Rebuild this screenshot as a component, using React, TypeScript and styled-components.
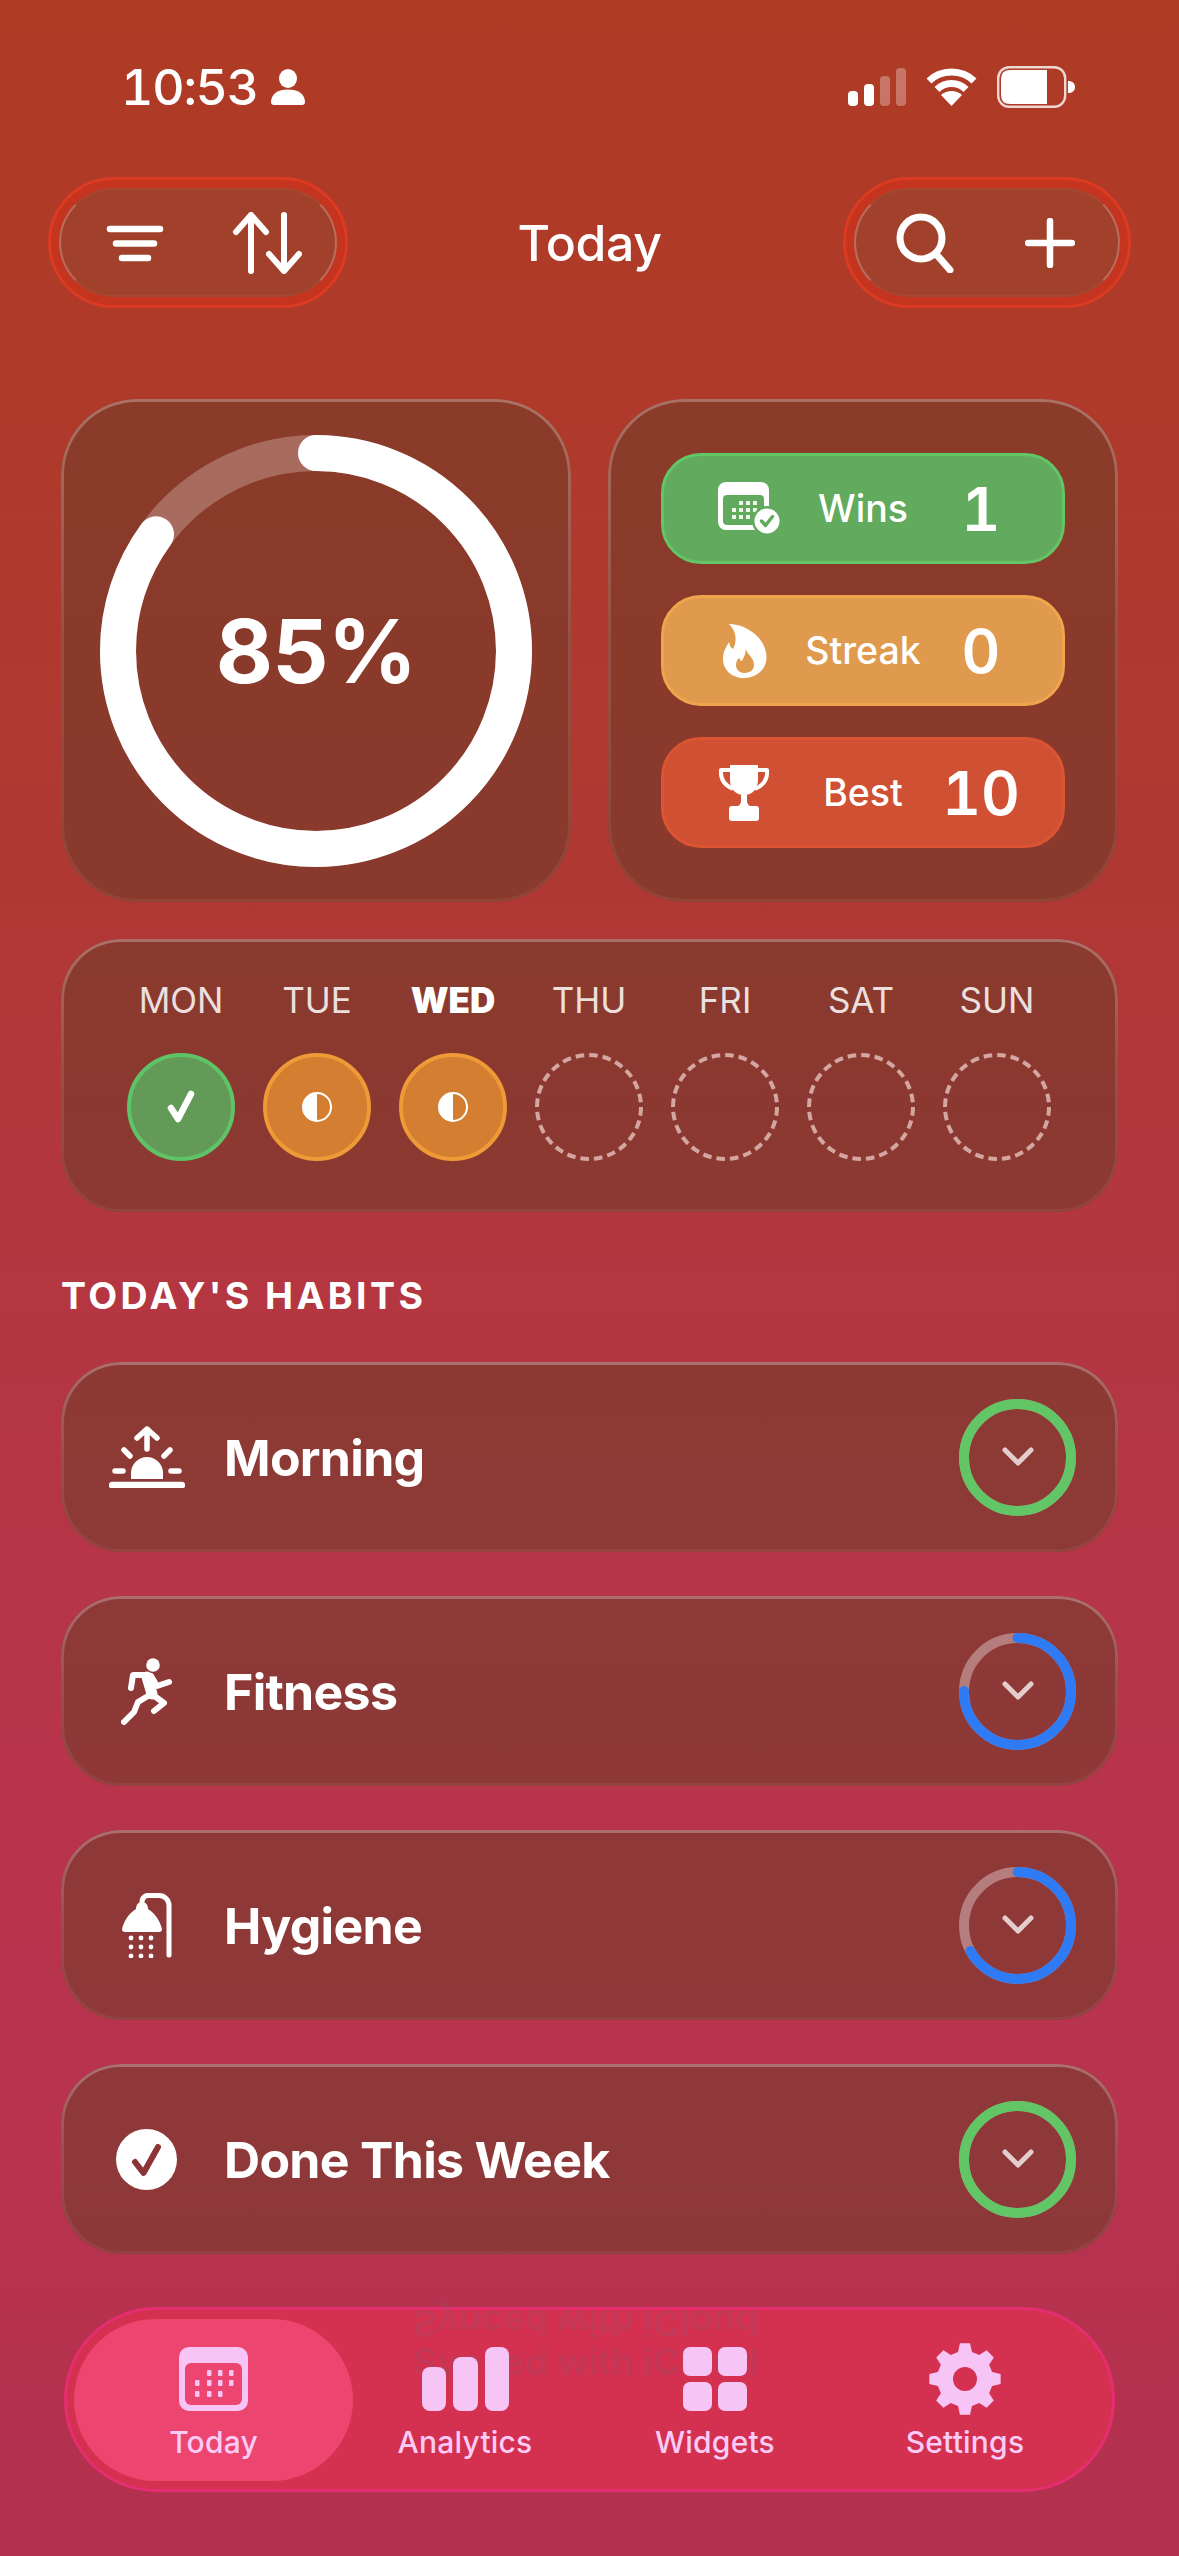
import React from "react";
import styled, { createGlobalStyle } from "styled-components";

const Global = createGlobalStyle`
  html, body { margin: 0; padding: 0; background: #B5304E; }
  * { box-sizing: border-box; }
`;

const Page = styled.div`
  width: 1179px;
  height: 2556px;
  overflow: hidden;
  padding: 66px 61px 0;
  display: flex;
  flex-direction: column;
  font-family: Inter, "Liberation Sans", sans-serif;
  color: #fff;
  background: linear-gradient(180deg, #AE3B24 0%, #AF3A2A 15%, #B03834 35%, #B43642 52%, #B8344C 72%, #B8334F 85%, #B2304E 100%);
`;

const StatusBar = styled.div`
  height: 42px;
  padding: 0 43px 0 60px;
  display: flex;
  align-items: center;
  justify-content: space-between;
`;
const TimeGroup = styled.div`
  display: flex;
  align-items: center;
  gap: 13px;
`;
const Time = styled.span`
  font-size: 50px;
  font-weight: 500;
  line-height: 42px;
  font-variant-numeric: tabular-nums;
  letter-spacing: -1.2px;
`;
const StatusIcons = styled.div`
  display: flex;
  align-items: center;
  gap: 20px;
`;

const Header = styled.header`
  margin: 69px -13px 0;
  height: 131px;
  display: grid;
  grid-template-columns: 1fr auto 1fr;
  align-items: center;
`;
const PillOuter = styled.div<{ $end?: boolean; $w: number }>`
  justify-self: ${(p) => (p.$end ? "end" : "start")};
  width: ${(p) => p.$w}px;
  height: 131px;
  padding: 8px;
  border-radius: 66px;
  background: #C5341F;
  border: 3px solid #DB3B22;
`;
const PillInner = styled.div<{ $pad: number; $gap: number }>`
  height: 109px;
  border-radius: 55px;
  background: #A1402B;
  border: 2px solid rgba(255, 255, 255, 0.24);
  border-top-color: rgba(255, 255, 255, 0.04);
  border-bottom-color: rgba(255, 255, 255, 0.04);
  display: flex;
  align-items: center;
  padding-left: ${(p) => p.$pad}px;
  gap: ${(p) => p.$gap}px;
`;
const Title = styled.h1`
  margin: 0;
  font-size: 50px;
  font-weight: 500;
  letter-spacing: -0.4px;
`;

const Glass = styled.div`
  position: relative;
  background: rgba(107, 60, 40, 0.55);
  &::before {
    content: "";
    position: absolute;
    inset: 0;
    border-radius: inherit;
    padding: 3px;
    background: linear-gradient(180deg, rgba(255, 255, 255, 0.28) 0%, rgba(255, 255, 255, 0.12) 45%, rgba(255, 255, 255, 0.05) 100%);
    -webkit-mask: linear-gradient(#000 0 0) content-box, linear-gradient(#000 0 0);
    -webkit-mask-composite: xor;
    mask-composite: exclude;
    pointer-events: none;
  }
`;

const CardRow = styled.section`
  margin-top: 91px;
  display: grid;
  grid-template-columns: 510px 510px;
  gap: 37px;
`;
const SquareCard = styled(Glass)`
  height: 503px;
  border-radius: 76px;
`;
const RingCard = styled(SquareCard)`
  display: grid;
  place-items: center;
  & > * { grid-area: 1 / 1; }
`;
const Percent = styled.span`
  font-size: 88px;
  font-weight: 700;
  letter-spacing: -0.8px;
`;
const StatsCard = styled(SquareCard)`
  padding: 54px 53px;
  display: flex;
  flex-direction: column;
  gap: 31px;
`;
const StatPill = styled.div<{ $bg: string; $line: string }>`
  height: 112px;
  border-radius: 40px;
  background: ${(p) => p.$bg};
  border: 3px solid ${(p) => p.$line};
  padding: 0 28px 0 54px;
  display: grid;
  grid-template-columns: 79px 132px 104px;
  align-items: center;
  justify-items: center;
`;
const StatIcon = styled.div`
  justify-self: start;
  display: flex;
`;
const StatLabel = styled.span`
  font-size: 37.5px;
  font-weight: 500;
  white-space: nowrap;
`;
const StatValue = styled.span`
  font-size: 60px;
  font-weight: 600;
  font-variant-numeric: tabular-nums;
`;

const WeekCard = styled(Glass)`
  margin-top: 37px;
  height: 273px;
  border-radius: 60px;
  padding: 40px 0 0 52px;
  display: grid;
  grid-template-columns: repeat(7, 136px);
  justify-items: center;
  align-content: start;
`;
const DayCol = styled.div`
  display: flex;
  flex-direction: column;
  align-items: center;
  gap: 31px;
`;
const DayLabel = styled.span<{ $on?: boolean }>`
  font-size: 35px;
  line-height: 43px;
  font-weight: ${(p) => (p.$on ? 900 : 400)};
  color: ${(p) => (p.$on ? "#fff" : "rgba(255,255,255,0.85)")};
`;
const DayMark = styled.div<{ $bg: string; $line: string }>`
  width: 108px;
  height: 108px;
  border-radius: 50%;
  background: ${(p) => p.$bg};
  border: 4px solid ${(p) => p.$line};
  display: grid;
  place-items: center;
`;

const SectionTitle = styled.h2`
  margin: 60px 0 0;
  height: 48px;
  font-size: 37.5px;
  line-height: 48px;
  font-weight: 700;
  letter-spacing: 3.4px;
`;
const Habits = styled.div`
  margin-top: 42px;
  display: flex;
  flex-direction: column;
  gap: 44px;
`;
const HabitRow = styled(Glass)`
  height: 190px;
  border-radius: 60px;
  padding: 0 42px 0 0;
  display: flex;
  align-items: center;
`;
const HabitIcon = styled.div`
  width: 163px;
  padding-left: 8px;
  display: grid;
  place-items: center;
`;
const HabitName = styled.span`
  flex: 1;
  padding-top: 2px;
  font-size: 50px;
  font-weight: 700;
  letter-spacing: -0.7px;
`;
const HabitRing = styled.div`
  width: 117px;
  height: 117px;
  display: grid;
  place-items: center;
  & > * { grid-area: 1 / 1; }
`;

const TabBar = styled.nav`
  position: relative;
  margin: 53px 3px 0 3px;
  height: 185px;
  border-radius: 92px;
  background: #D43150;
  border: 3px solid #E52E70;
  padding: 9px 7px;
  display: grid;
  grid-template-columns: 279px 224px 276px 224px;
`;
const Ghost = styled.div`
  position: absolute;
  left: 346px;
  top: 33px;
  font-size: 37px;
  font-weight: 600;
  white-space: nowrap;
  color: rgba(150, 80, 110, 0.28);
  line-height: 37px;
`;
const GhostFlip = styled(Ghost)`
  top: -5px;
  transform: scaleY(-1);
`;
const Tab = styled.div<{ $on?: boolean }>`
  position: relative;
  height: 162px;
  border-radius: 81px;
  background: ${(p) => (p.$on ? "#EC4570" : "transparent")};
  display: flex;
  flex-direction: column;
  align-items: center;
  padding-top: 24px;
  color: #F6C5F6;
`;
const TabIconBox = styled.div`
  height: 72px;
  display: flex;
  align-items: center;
  justify-content: center;
`;
const TabLabel = styled.span`
  margin-top: 9px;
  font-size: 30px;
  line-height: 36px;
  font-weight: 500;
  letter-spacing: 0.2px;
  color: #F9CBF6;
`;

function Ring({ size, width, pct, color, track }: { size: number; width: number; pct: number; color: string; track: string }) {
  const r = (size - width) / 2;
  const c = 2 * Math.PI * r;
  return (
    <svg width={size} height={size} viewBox={`0 0 ${size} ${size}`} style={{ transform: "rotate(-90deg)" }}>
      <circle cx={size / 2} cy={size / 2} r={r} fill="none" stroke={track} strokeWidth={width} />
      <circle
        cx={size / 2}
        cy={size / 2}
        r={r}
        fill="none"
        stroke={color}
        strokeWidth={width}
        strokeLinecap="round"
        strokeDasharray={`${(c * pct) / 100} ${c}`}
      />
    </svg>
  );
}

const Chevron = () => (
  <svg width="32" height="20" viewBox="0 0 32 20" fill="none" stroke="rgba(255,255,255,0.75)" strokeWidth="5" strokeLinecap="round" strokeLinejoin="round">
    <path d="M3 3 L16 16 L29 3" />
  </svg>
);

const PersonIcon = () => (
  <svg width="34" height="36" viewBox="0 0 34 36" fill="#fff">
    <ellipse cx="17" cy="9.5" rx="9" ry="9.5" />
    <path d="M0 33 C0 25 7 20.5 17 20.5 C27 20.5 34 25 34 33 Q34 36 31 36 H3 Q0 36 0 33Z" />
  </svg>
);
const SignalIcon = () => (
  <svg width="58" height="38" viewBox="0 0 58 38" fill="#fff">
    <rect x="0" y="23" width="10" height="15" rx="4" />
    <rect x="16" y="16" width="10" height="22" rx="4" />
    <rect x="32" y="8" width="10" height="30" rx="4" opacity="0.3" />
    <rect x="48" y="0" width="10" height="38" rx="4" opacity="0.3" />
  </svg>
);
const WifiIcon = () => (
  <svg width="51" height="38" viewBox="0 0 51 38" fill="none" stroke="#fff" strokeWidth="7">
    <path d="M3 13 C15 1 36 1 48 13" />
    <path d="M11 21.5 C19 13.5 32 13.5 40 21.5" />
    <path d="M25.5 38 L15 27 C21 21.5 30 21.5 36 27 Z" fill="#fff" stroke="none" />
  </svg>
);
const BatteryIcon = () => (
  <svg width="78" height="42" viewBox="0 0 78 42">
    <rect x="1.2" y="1.2" width="67" height="39.6" rx="11" fill="none" stroke="#fff" strokeWidth="2.4" opacity="0.8" />
    <path d="M13 4 H50 V38 H13 Q4 38 4 29 V13 Q4 4 13 4Z" fill="#fff" />
    <path d="M71 15 C75 15 78 17 78 21 C78 25 75 27 71 27Z" fill="#fff" />
  </svg>
);

const FilterIcon = () => (
  <svg width="60" height="50" viewBox="0 0 60 50" fill="none" stroke="#fff" strokeWidth="6.5" strokeLinecap="round">
    <path d="M5 11 H55" />
    <path d="M11 25.5 H49" />
    <path d="M17 40 H43" />
  </svg>
);
const SortIcon = () => (
  <svg width="72" height="62" viewBox="0 0 72 62" fill="none" stroke="#fff" strokeWidth="6" strokeLinecap="round" strokeLinejoin="round">
    <path d="M20 59 V3 M5 20 L20 3 L35 20" />
    <path d="M53 3 V59 M38 42 L53 59 L68 42" />
  </svg>
);
const SearchIcon = () => (
  <svg width="60" height="60" viewBox="0 0 60 60" fill="none" stroke="#fff" strokeWidth="7" strokeLinecap="round">
    <circle cx="26" cy="25" r="21" />
    <path d="M41 41 L55 57" />
  </svg>
);
const PlusIcon = () => (
  <svg width="50" height="50" viewBox="0 0 50 50" fill="none" stroke="#fff" strokeWidth="6.5" strokeLinecap="round">
    <path d="M25 3 V47 M3 25 H47" />
  </svg>
);

const WinsIcon = () => (
  <svg width="64" height="54" viewBox="0 0 64 54">
    <rect x="0" y="0" width="51" height="48" rx="8" fill="#fff" />
    <rect x="5" y="13" width="41" height="30" rx="4" fill="#62AB5E" />
    {[[21, 19], [28, 19], [35, 19], [14, 26], [21, 26], [28, 26], [35, 26], [14, 33], [21, 33], [28, 33]].map(([x, y]) => (
      <rect key={`${x}-${y}`} x={x} y={y} width="4" height="4" fill="#fff" opacity="0.9" />
    ))}
    <circle cx="49" cy="39" r="15" fill="#62AB5E" />
    <circle cx="49" cy="39" r="12.5" fill="#fff" />
    <path d="M43.5 39 L47.5 43.5 L54.5 34.5" fill="none" stroke="#62AB5E" strokeWidth="3.4" strokeLinecap="round" strokeLinejoin="round" />
  </svg>
);
const FlameIcon = () => (
  <svg width="49" height="54" viewBox="-5 0 49 54">
    <path d="M6 0 C24 0 44 15 43.5 34 C43 46 33 54 21 54 C9 54 0 46 0 35 C0 28 3 23 6 18 C7 22 8 24 10 25 C14 18 14 8 6 0Z" fill="#fff" />
    <path d="M23 24 C23 30 31 33 31 41 C31 46 27 49 21 49 C16 49 13 45 13 41 C13 38 14 36 16 34 C17 36 18 37 19 37 C21 33 23 29 23 24Z" fill="#E09A4E" />
  </svg>
);
const TrophyIcon = () => (
  <svg width="52" height="56" viewBox="0 0 52 56">
    <path d="M12 0 H40 V15 C40 24 34 30 26 30 C18 30 12 24 12 15Z" fill="#fff" />
    <path d="M12 5 H3 C2 16 8 21 15 24 M40 5 H49 C50 16 44 21 37 24" fill="none" stroke="#fff" strokeWidth="4" strokeLinejoin="round" />
    <path d="M23 28 H29 V36 C29 39 31 41 34 42 H18 C21 41 23 39 23 36Z" fill="#fff" />
    <rect x="11" y="41" width="30" height="15" rx="3" fill="#fff" />
  </svg>
);

const CheckSmall = () => (
  <svg width="32" height="34" viewBox="0 0 32 34" fill="none" stroke="#fff" strokeWidth="6.5" strokeLinecap="round" strokeLinejoin="round">
    <path d="M6 18 L13 29 L26 4" />
  </svg>
);
const HalfIcon = () => (
  <svg width="30" height="30" viewBox="0 0 30 30">
    <circle cx="15" cy="15" r="14" fill="none" stroke="#fff" strokeWidth="2" />
    <path d="M15 1 A14 14 0 0 0 15 29Z" fill="#fff" />
  </svg>
);
const DashedMark = () => (
  <svg width="108" height="108" viewBox="0 0 108 108" fill="none">
    <circle cx="54" cy="54" r="52" stroke="#D4A6A2" strokeWidth="4" strokeDasharray="8.6 5" />
  </svg>
);

const SunriseIcon = () => (
  <svg width="76" height="62" viewBox="0 0 76 62" fill="none" stroke="#fff" strokeWidth="5.5" strokeLinecap="round" strokeLinejoin="round">
    <path d="M3 59 H73" strokeWidth="6.5" />
    <path d="M22 53 V47 A16 16 0 0 1 54 47 V53Z" fill="#fff" stroke="none" />
    <path d="M6 45 H14 M62 45 H70 M15 24 L21 30 M61 24 L55 30" />
    <path d="M38 23 V3 M28 12 L38 3 L48 12" />
  </svg>
);
const RunnerIcon = () => (
  <svg width="51" height="67" viewBox="0 0 51 67" fill="none" stroke="#fff" strokeWidth="6" strokeLinecap="round" strokeLinejoin="round">
    <circle cx="32" cy="7" r="6.8" fill="#fff" stroke="none" />
    <path d="M26 19 L31 36" strokeWidth="11" />
    <path d="M26 17 H12 L10 30" />
    <path d="M30 18 L36 28 L48 24" />
    <path d="M32 37 L43 45 L33 53" />
    <path d="M27 38 L17 44 L13 54 L3 64" />
  </svg>
);
const ShowerIcon = () => (
  <svg width="50" height="65" viewBox="0 0 50 65">
    <path d="M47 62 V12 A10 10 0 0 0 37 2.5 H25 A7 7 0 0 0 20 9" fill="none" stroke="#fff" strokeWidth="5" strokeLinecap="round" />
    <path d="M20 9 C24 9 26 12 26 16 C33 20 38 28 40 36 Q40 39 37 39 H3 Q0 39 0 36 C2 28 7 20 14 16 C14 12 16 9 20 9Z" fill="#fff" />
    {[45, 54, 63].map((y) =>
      [9, 19, 29].map((x) => <circle key={`${x}-${y}`} cx={x} cy={y} r="2.4" fill="#fff" />)
    )}
  </svg>
);
const DoneIcon = () => (
  <svg width="61" height="61" viewBox="0 0 61 61">
    <circle cx="30.5" cy="30.5" r="30.5" fill="#fff" />
    <path d="M19 33 L27.5 44 L42 18" fill="none" stroke="#8C3539" strokeWidth="6" strokeLinecap="round" strokeLinejoin="round" />
  </svg>
);

const CalendarTab = () => (
  <svg width="69" height="64" viewBox="0 0 69 64">
    <rect x="0" y="0" width="69" height="64" rx="10" fill="#F6C5F6" />
    <rect x="6" y="16" width="57" height="42" rx="6" fill="#EC4570" />
    {[[30, 23], [41, 23], [52, 23], [18, 33], [30, 33], [41, 33], [52, 33], [18, 44], [30, 44], [41, 44]].map(([x, y]) => (
      <rect key={`${x}-${y}`} x={x - 2} y={y} width="4.5" height="6" rx="1" fill="#F6C5F6" />
    ))}
  </svg>
);
const BarsTab = () => (
  <svg width="87" height="64" viewBox="0 0 87 64" fill="currentColor">
    <rect x="0" y="20" width="24" height="44" rx="8" />
    <rect x="31" y="10" width="25" height="54" rx="8" />
    <rect x="63" y="0" width="24" height="64" rx="8" />
  </svg>
);
const GridTab = () => (
  <svg width="64" height="64" viewBox="0 0 64 64" fill="currentColor">
    <rect x="0" y="0" width="29" height="29" rx="7" />
    <rect x="35" y="0" width="29" height="29" rx="7" />
    <rect x="0" y="35" width="29" height="29" rx="7" />
    <rect x="35" y="35" width="29" height="29" rx="7" />
  </svg>
);
function gearPath(): string {
  const teeth = 8;
  const out = 36;
  const inn = 28;
  const pts: string[] = [];
  for (let i = 0; i < teeth; i++) {
    const a = (i * 2 * Math.PI) / teeth - Math.PI / 2;
    const step = (2 * Math.PI) / teeth;
    [
      [inn, a - step * 0.32],
      [out, a - step * 0.18],
      [out, a + step * 0.18],
      [inn, a + step * 0.32],
    ].forEach(([r, t]) => pts.push(`${(36 + r * Math.cos(t)).toFixed(2)} ${(36 + r * Math.sin(t)).toFixed(2)}`));
  }
  return `M${pts.join(" L")}Z M36 24 A12 12 0 1 0 36 48 A12 12 0 1 0 36 24Z`;
}
const GearTab = () => (
  <svg width="72" height="72" viewBox="0 0 72 72">
    <path d={gearPath()} fill="currentColor" fillRule="evenodd" />
  </svg>
);

const days = ["MON", "TUE", "WED", "THU", "FRI", "SAT", "SUN"];
const habits = [
  { name: "Morning", icon: <SunriseIcon />, pct: 100, color: "#62C566" },
  { name: "Fitness", icon: <RunnerIcon />, pct: 75, color: "#2F7BF5" },
  { name: "Hygiene", icon: <ShowerIcon />, pct: 67, color: "#2F7BF5" },
  { name: "Done This Week", icon: <DoneIcon />, pct: 100, color: "#62C566" },
];

function Mark({ index }: { index: number }) {
  if (index === 0) {
    return (
      <DayMark $bg="#649A58" $line="#5FC468">
        <CheckSmall />
      </DayMark>
    );
  }
  if (index < 3) {
    return (
      <DayMark $bg="#D37E30" $line="#EE9A37">
        <HalfIcon />
      </DayMark>
    );
  }
  return <DashedMark />;
}

export default function App() {
  return (
    <Page>
      <Global />
      <StatusBar>
        <TimeGroup>
          <Time>10:53</Time>
          <PersonIcon />
        </TimeGroup>
        <StatusIcons>
          <SignalIcon />
          <WifiIcon />
          <BatteryIcon />
        </StatusIcons>
      </StatusBar>

      <Header>
        <PillOuter $w={300}>
          <PillInner $pad={44} $gap={66}>
            <FilterIcon />
            <SortIcon />
          </PillInner>
        </PillOuter>
        <Title>Today</Title>
        <PillOuter $end $w={288}>
          <PillInner $pad={39} $gap={70}>
            <SearchIcon />
            <PlusIcon />
          </PillInner>
        </PillOuter>
      </Header>

      <CardRow>
        <RingCard>
          <Ring size={432} width={36} pct={85} color="#fff" track="rgba(255,255,255,0.25)" />
          <Percent>85%</Percent>
        </RingCard>
        <StatsCard>
          <StatPill $bg="#62AB5E" $line="#62C566">
            <StatIcon><WinsIcon /></StatIcon>
            <StatLabel>Wins</StatLabel>
            <StatValue>1</StatValue>
          </StatPill>
          <StatPill $bg="#E09A4E" $line="#F0A54C">
            <StatIcon><FlameIcon /></StatIcon>
            <StatLabel>Streak</StatLabel>
            <StatValue>0</StatValue>
          </StatPill>
          <StatPill $bg="#CF5032" $line="#DC5532">
            <StatIcon><TrophyIcon /></StatIcon>
            <StatLabel>Best</StatLabel>
            <StatValue>10</StatValue>
          </StatPill>
        </StatsCard>
      </CardRow>

      <WeekCard>
        {days.map((d, i) => (
          <DayCol key={d}>
            <DayLabel $on={d === "WED"}>{d}</DayLabel>
            <Mark index={i} />
          </DayCol>
        ))}
      </WeekCard>

      <SectionTitle>TODAY'S HABITS</SectionTitle>
      <Habits>
        {habits.map((h) => (
          <HabitRow key={h.name}>
            <HabitIcon>{h.icon}</HabitIcon>
            <HabitName>{h.name}</HabitName>
            <HabitRing>
              <Ring size={117} width={10} pct={h.pct} color={h.color} track="rgba(255,255,255,0.35)" />
              <Chevron />
            </HabitRing>
          </HabitRow>
        ))}
      </Habits>

      <TabBar>
        <GhostFlip>Synced with iCloud</GhostFlip>
        <Ghost>Synced with iCloud</Ghost>
        <Tab $on>
          <TabIconBox><CalendarTab /></TabIconBox>
          <TabLabel>Today</TabLabel>
        </Tab>
        <Tab>
          <TabIconBox><BarsTab /></TabIconBox>
          <TabLabel>Analytics</TabLabel>
        </Tab>
        <Tab>
          <TabIconBox><GridTab /></TabIconBox>
          <TabLabel>Widgets</TabLabel>
        </Tab>
        <Tab>
          <TabIconBox><GearTab /></TabIconBox>
          <TabLabel>Settings</TabLabel>
        </Tab>
      </TabBar>
    </Page>
  );
}
